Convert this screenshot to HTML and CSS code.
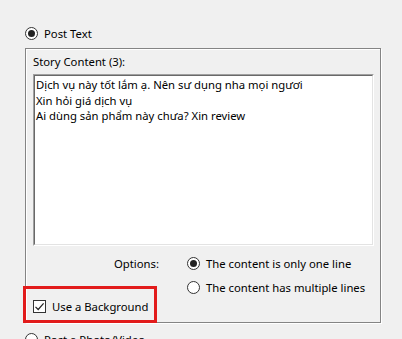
FILE: index.html
```html
<!DOCTYPE html>
<html>
<head>
<meta charset="utf-8">
<link rel="stylesheet" href="styles.css">
</head>
<body>
<div class="page">
  <label class="opt top-opt">
    <span class="radio checked"></span>
    <span class="lbl">Post Text</span>
  </label>
  <div class="group">
    <div class="caption">Story Content (3):</div>
    <div class="edit-outer">
      <div class="edit-inner">
        <div class="line">Dịch vụ này tốt lắm ạ. Nên sư dụng nha mọi ngươi</div>
        <div class="line">Xin hỏi giá dịch vụ</div>
        <div class="line">Ai dùng sản phẩm này chưa? Xin review</div>
      </div>
    </div>
    <div class="options">
      <div class="opt-label">Options:</div>
      <div class="opt-list">
        <label class="opt">
          <span class="radio checked"></span>
          <span class="lbl">The content is only one line</span>
        </label>
        <label class="opt">
          <span class="radio"></span>
          <span class="lbl">The content has multiple lines</span>
        </label>
      </div>
    </div>
    <label class="opt check-row">
      <span class="check">
        <svg width="11" height="11" viewBox="0 0 11 11"><path d="M1.5 5.8 L4.2 8.5 L9.6 2.4" fill="none" stroke="#222" stroke-width="1.2"/></svg>
      </span>
      <span class="lbl">Use a Background</span>
    </label>
  </div>
  <label class="opt bottom-opt">
    <span class="radio"></span>
    <span class="lbl">Post a Photo/Video</span>
  </label>
  <div class="highlight"></div>
</div>
</body>
</html>
```
FILE: styles.css
```css
html, body {
  margin: 0;
  padding: 0;
  background: #f0f0f0;
  overflow: hidden;
}
.page {
  position: relative;
  width: 402px;
  height: 339px;
  padding: 27px 0 0 25px;
  box-sizing: border-box;
  font-family: "Noto Sans", "Open Sans", sans-serif;
  font-size: 11.3px;
  color: #000;
}
.opt {
  display: flex;
  align-items: center;
  gap: 6px;
  height: 13px;
  line-height: 13px;
  white-space: nowrap;
}
.radio {
  width: 11px;
  height: 11px;
  border: 1px solid #333;
  border-radius: 50%;
  background: #fff;
  position: relative;
  flex: none;
}
.radio.checked::after {
  content: "";
  position: absolute;
  left: 2px;
  top: 2px;
  width: 7px;
  height: 7px;
  border-radius: 50%;
  background: #222;
}
.group {
  margin-top: 8px;
  width: 347px;
  height: 273px;
  border: 1px solid #848484;
  box-shadow: 1px 1px 0 #fff, inset 1px 1px 0 #fff;
  padding: 0 0 0 7px;
  box-sizing: content-box;
}
.caption {
  height: 16px;
  line-height: 16px;
  margin-top: 5px;
}
.edit-outer {
  margin-top: 4px;
  width: 339px;
  height: 170px;
  border-top: 1px solid #a0a0a0;
  border-left: 1px solid #a0a0a0;
  border-right: 1px solid #fff;
  border-bottom: 1px solid #fff;
}
.edit-inner {
  height: 100%;
  box-sizing: border-box;
  border-top: 1px solid #696969;
  border-left: 1px solid #696969;
  border-right: 1px solid #e3e3e3;
  border-bottom: 1px solid #e3e3e3;
  background: #fff;
  padding: 1px 0 0 1px;
}
.line {
  height: 15.5px;
  line-height: 15.5px;
  white-space: nowrap;
}
.options {
  display: flex;
  margin-top: 11px;
}
.opt-label {
  width: 126px;
  text-align: right;
  line-height: 13px;
  height: 13px;
}
.opt-list {
  margin-left: 28px;
  display: flex;
  flex-direction: column;
  gap: 11px;
}
.check-row {
  margin-top: 6px;
  gap: 6px;
}
.check {
  width: 11px;
  height: 11px;
  border: 1px solid #333;
  background: #fff;
  display: flex;
  align-items: center;
  justify-content: center;
  flex: none;
}
.check svg { display: block; }
.bottom-opt {
  margin-top: 10px;
}
.highlight {
  position: absolute;
  left: 23px;
  top: 286px;
  width: 128px;
  height: 31px;
  border: 3px solid #e21b1b;
}
```
